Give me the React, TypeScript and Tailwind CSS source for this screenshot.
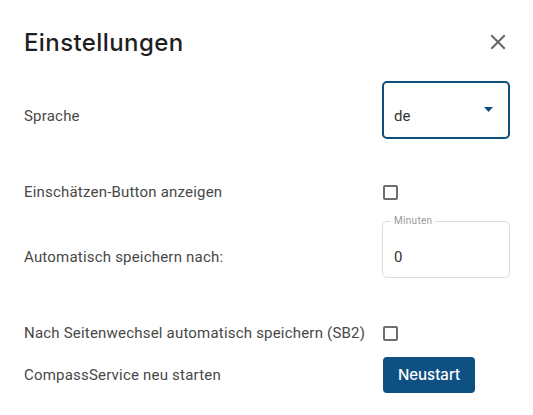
import React from "react";

const labelCls =
  "text-[15px] leading-[20px] text-[#484848] font-['Roboto',sans-serif] tracking-[0.2px]";

function CheckBox() {
  return (
    <div className="w-[15px] h-[15px] rounded-[2px] border-2 border-[#6e6e6e] bg-white" />
  );
}

export default function App() {
  return (
    <div className="w-[533px] h-[415px] bg-white font-['Roboto',sans-serif]">
      {/* header */}
      <div className="flex items-center justify-between pl-6 pr-[27px] pt-[27px]">
        <h1 className="text-[24px] leading-[32px] font-medium text-[#1f1f1f] font-['Inter',sans-serif] tracking-[0.4px]">
          Einstellungen
        </h1>
        <svg width="16" height="16" viewBox="0 0 16 16" className="mt-[-2px]">
          <path d="M2 2L14 14M14 2L2 14" stroke="#666" strokeWidth="2" strokeLinecap="square" />
        </svg>
      </div>

      <div className="pl-6 flex flex-col">
        {/* language */}
        <div className="mt-[22px] grid grid-cols-[358px_128px] items-center h-[58px]">
          <span className={`${labelCls} pt-3`}>Sprache</span>
          <div className="h-[58px] rounded-[5px] border-2 border-[#0f4f80] flex items-center justify-between pl-[10px] pr-[15px]">
            <span className="pt-3 text-[15px] text-[#333]">de</span>
            <svg width="9" height="5" viewBox="0 0 9 5" className="mb-[1px]">
              <path d="M0 0H9L4.5 5Z" fill="#0f4f80" />
            </svg>
          </div>
        </div>

        {/* show estimate button */}
        <div className="mt-[38px] grid grid-cols-[359px_127px] items-center h-[30px]">
          <span className={labelCls}>Einschätzen-Button anzeigen</span>
          <CheckBox />
        </div>

        {/* autosave minutes */}
        <div className="mt-[8px] grid grid-cols-[358px_128px] items-center h-[63px]">
          <span className={`${labelCls} pt-[21px]`}>Automatisch speichern nach:</span>
          <fieldset className="h-[63px] rounded-[5px] border border-[#dcdcdc] pl-[7px] pr-3 m-0">
            <legend className="px-[3px] ml-[1px] text-[10px] leading-[12px] text-[#9a9a9a] tracking-[0.3px]">
              Minuten
            </legend>
            <div className="pl-[4px] pt-[20px] text-[15px] leading-[20px] text-[#333]">0</div>
          </fieldset>
        </div>

        {/* autosave on page change */}
        <div className="mt-[40px] grid grid-cols-[359px_127px] items-center h-[30px]">
          <span className={labelCls}>Nach Seitenwechsel automatisch speichern (SB2)</span>
          <CheckBox />
        </div>

        {/* restart service */}
        <div className="mt-[9px] grid grid-cols-[359px_127px] items-center h-[36px]">
          <span className={labelCls}>CompassService neu starten</span>
          <div>
            <button className="h-[36px] w-[92px] rounded-[4px] bg-[#0f5082] text-white text-[15px] font-medium font-['Inter',sans-serif]">
              Neustart
            </button>
          </div>
        </div>
      </div>
    </div>
  );
}
